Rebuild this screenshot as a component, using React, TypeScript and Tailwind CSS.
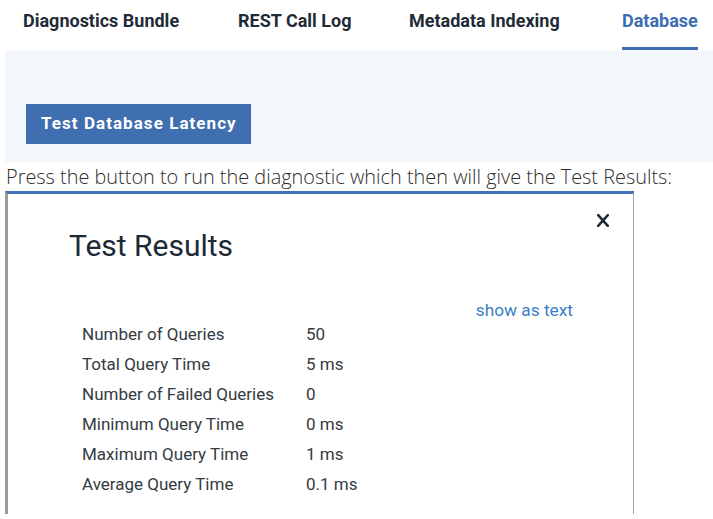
import React from "react";

const rows: [string, string][] = [
  ["Number of Queries", "50"],
  ["Total Query Time", "5 ms"],
  ["Number of Failed Queries", "0"],
  ["Minimum Query Time", "0 ms"],
  ["Maximum Query Time", "1 ms"],
  ["Average Query Time", "0.1 ms"],
];

export default function App() {
  return (
    <div
      className="w-[713px] h-[519px] bg-white overflow-hidden"
      style={{ fontFamily: "Roboto, 'Liberation Sans', sans-serif" }}
    >
      {/* Tabs */}
      <nav className="h-[50px] flex pl-[23px] text-[18px] font-bold leading-[20px] text-[#1f2c37]">
        <div className="w-[215px] pt-[11px]">Diagnostics Bundle</div>
        <div className="w-[171px] pt-[11px]">REST Call Log</div>
        <div className="w-[213px] pt-[11px]">Metadata Indexing</div>
        <div className="flex">
          <span className="inline-block pt-[11px] h-[50px] border-b-[3px] border-[#3e6db1] text-[#3d6db3]">
            Database
          </span>
        </div>
      </nav>

      {/* Gray panel */}
      <div className="ml-[5px] h-[112px] bg-[#f3f6fb] pl-[21px] pt-[54px]">
        <button className="w-[225px] h-[40px] bg-[#3f6eb1] text-white text-[17px] font-bold tracking-[1.05px] flex items-center pl-[15px]">
          Test Database Latency
        </button>
      </div>

      <p
        className="ml-[6px] mt-[1px] text-[19.9px] leading-[28px] font-light text-[#2e2e2e]"
        style={{ fontFamily: "'Open Sans', 'Liberation Sans', sans-serif" }}
      >
        Press the button to run the diagnostic which then will give the Test Results:
      </p>

      {/* Dialog */}
      <div className="ml-[5px] w-[629px] h-[323px] border-t-[3px] border-t-[#4070b5] border-l-[3px] border-l-[#9a9a9a] border-r border-r-[#a3a3a3]">
        <div className="flex justify-between items-start pl-[61px] pr-[24px] pt-[20px]">
          <h2 className="mt-[14px] text-[30px] leading-[36px] font-normal text-[#1c2a35]">
            Test Results
          </h2>
          <svg width="12" height="13" viewBox="0 0 12 13" className="shrink-0">
            <path
              d="M1.2 1.2 L10.8 11.8 M10.8 1.2 L1.2 11.8"
              stroke="#1f2c37"
              strokeWidth="2.6"
              strokeLinecap="square"
            />
          </svg>
        </div>
        <div className="mt-[36px] flex justify-end pr-[60px]">
          <a className="text-[17.3px] leading-[20px] text-[#3a80c8] cursor-pointer">show as text</a>
        </div>
        <div className="-mt-[1px] grid grid-cols-[224px_auto] pl-[74px] text-[17px] leading-[30px] text-[#343b42]">
          {rows.map(([k, v]) => (
            <React.Fragment key={k}>
              <div>{k}</div>
              <div>{v}</div>
            </React.Fragment>
          ))}
        </div>
      </div>
    </div>
  );
}
